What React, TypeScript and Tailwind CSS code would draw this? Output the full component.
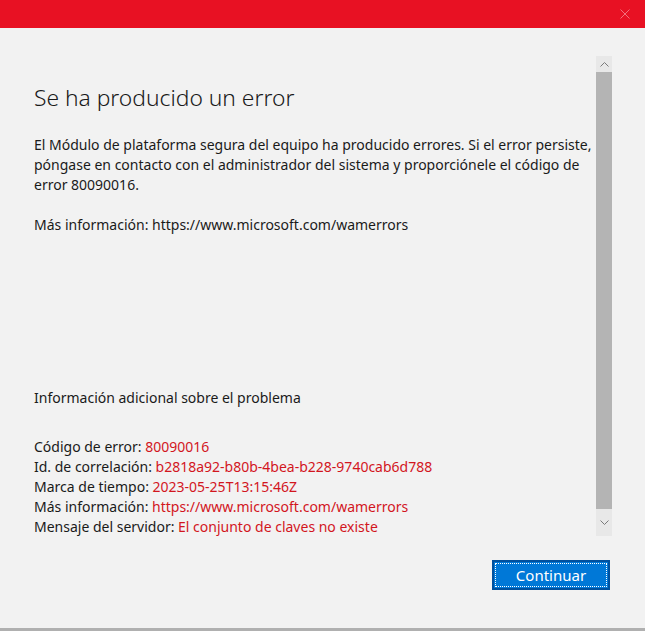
const details: [string, string][] = [
  ['Código de error:', '80090016'],
  ['Id. de correlación:', 'b2818a92-b80b-4bea-b228-9740cab6d788'],
  ['Marca de tiempo:', '2023-05-25T13:15:46Z'],
  ['Más información:', 'https://www.microsoft.com/wamerrors'],
  ['Mensaje del servidor:', 'El conjunto de claves no existe'],
];

export default function App() {
  return (
    <div className="flex h-[631px] w-[645px] flex-col bg-[#f2f2f2] font-['Segoe_UI','Noto_Sans',sans-serif] text-[#1a1a1a]">
      {/* title bar */}
      <div className="flex h-[28px] shrink-0 items-center justify-end bg-[#e81123] pr-[15px]">
        <svg width="10" height="10" viewBox="0 0 10 10" className="text-[#f2707b]">
          <path d="M0.5 0.5 L9.5 9.5 M9.5 0.5 L0.5 9.5" stroke="currentColor" strokeWidth="1" />
        </svg>
      </div>

      {/* body */}
      <div className="mt-[28px] flex h-[480px] shrink-0">
        <div className="flex min-w-0 flex-1 flex-col pl-[34px] pr-[4px] text-[14px] leading-[20px] whitespace-nowrap">
          <h1 className="mt-[27px] text-[22.8px] leading-[30px] font-light">Se ha producido un error</h1>
          <p className="mt-[22px]">
            El Módulo de plataforma segura del equipo ha producido errores. Si el error persiste,
            <br />
            póngase en contacto con el administrador del sistema y proporciónele el código de
            <br />
            error 80090016.
          </p>
          <p className="mt-[20px]">Más información: https://www.microsoft.com/wamerrors</p>
          <p className="mt-[153px]">Información adicional sobre el problema</p>
          <div className="mt-[29px] flex flex-col">
            {details.map(([label, value]) => (
              <div key={label}>
                {label} <span className="text-[#d2161e]">{value}</span>
              </div>
            ))}
          </div>
        </div>
        {/* scrollbar */}
        <div className="mr-[33px] flex w-[16px] shrink-0 flex-col bg-[#e8e8e8]">
          <div className="flex h-[16px] items-center justify-center">
            <svg width="9" height="5" viewBox="0 0 9 5">
              <path d="M0.5 4.5 L4.5 0.5 L8.5 4.5" fill="none" stroke="#7a7a7a" strokeWidth="1" />
            </svg>
          </div>
          <div className="flex-1 bg-[#b4b4b4]" />
          <div className="flex h-[27px] items-center justify-center">
            <svg width="9" height="5" viewBox="0 0 9 5">
              <path d="M0.5 0.5 L4.5 4.5 L8.5 0.5" fill="none" stroke="#7a7a7a" strokeWidth="1" />
            </svg>
          </div>
        </div>
      </div>

      {/* footer */}
      <div className="flex flex-1 items-start justify-end pr-[35px] pt-[24px]">
        <button className="h-[30px] w-[118px] border-2 border-[#00509d] bg-[#0078d7] p-[1px] text-[15px] text-white">
          <div className="flex h-full w-full items-center justify-center border border-dotted border-white">
            Continuar
          </div>
        </button>
      </div>
      <div className="h-[3px] shrink-0 bg-[#b0b0b0]" />
    </div>
  );
}
